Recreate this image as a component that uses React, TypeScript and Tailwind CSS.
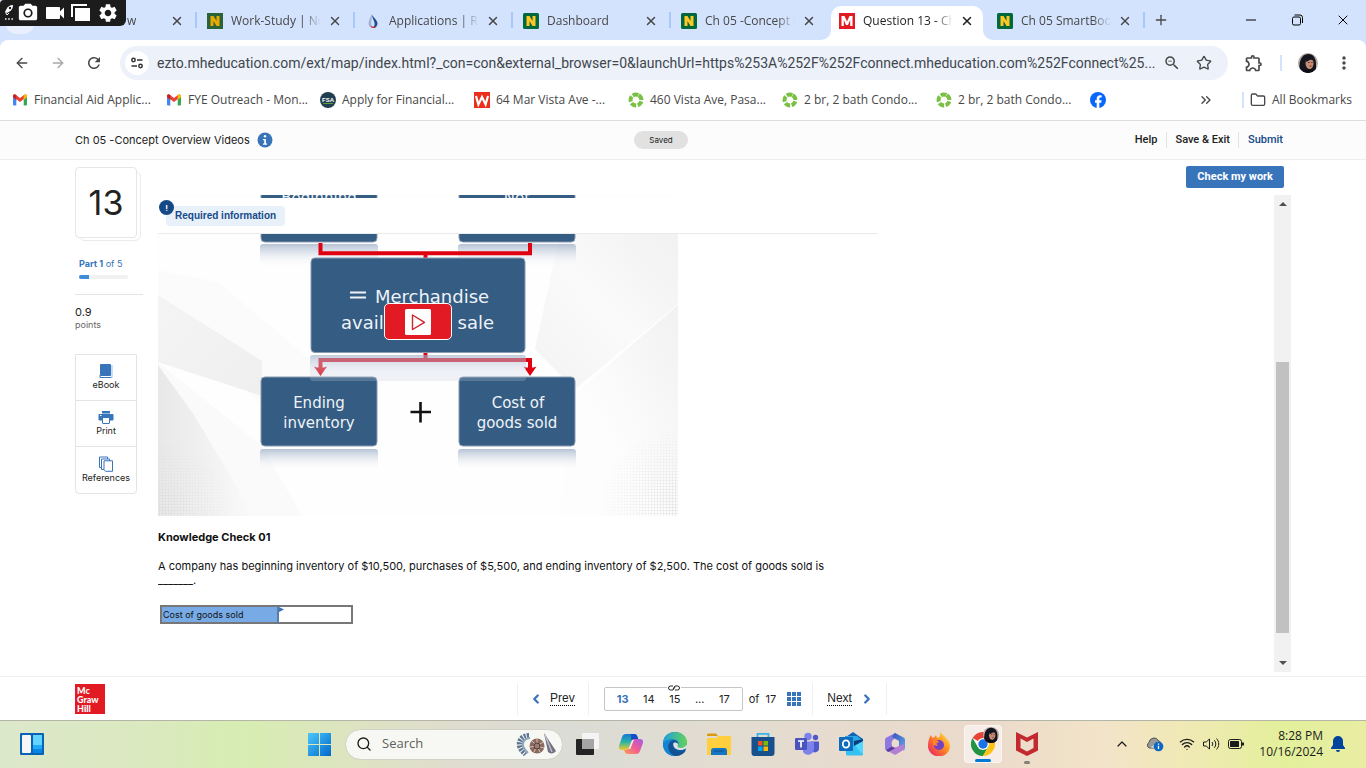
import type { ReactNode } from "react";
import {
  ArrowLeft,
  ArrowRight,
  ChevronLeft,
  ChevronRight,
  ChevronUp,
  ChevronsRight,
  Folder,
  Minus,
  Plus,
  Search,
  Star,
  Wifi,
  X,
} from "lucide-react";
import {
  MdMoreVert,
  MdOutlineExtension,
  MdPhotoCamera,
  MdRefresh,
  MdSettings,
  MdVideocam,
  MdZoomOut,
} from "react-icons/md";

const fadeOut =
  "overflow-hidden whitespace-nowrap [mask-image:linear-gradient(to_right,black_80%,transparent)]";

/* ---------- favicons ---------- */

function NIcon({ dull = false }: { dull?: boolean }) {
  return (
    <svg viewBox="0 0 16 16" className="size-4 shrink-0">
      <rect width="16" height="16" rx={dull ? 0 : 1.5} fill={dull ? "#2a6338" : "#00683a"} />
      <path
        d="M3.500 13V3h3l3 5V3h3v10h-3l-3-5v5z"
        fill={dull ? "#eaa900" : "#ffc726"}
      />
    </svg>
  );
}

function DropIcon() {
  return (
    <svg viewBox="0 0 16 16" className="size-4 shrink-0">
      <path d="M7 1C5 5 3.500 8 3.500 10.500A4.500 4.500 0 0 0 8 15c-2-2-2-5-1.500-8C6.800 5 7 3 7 1z" fill="#9fb4d6" />
      <path d="M7 1c.5 3 5.500 6 5.500 9.500C12.500 13 10.500 15 8 15c2-2 2.200-5 .5-8C7.500 5 7 3 7 1z" fill="#1c4f93" />
      <path d="M5.500 12.500C6 14 7 15 8 15c1.500 0 2.500-.6 3.300-1.600-2 .6-4.500.3-5.800-.9z" fill="#d22630" />
    </svg>
  );
}

function MIcon() {
  return (
    <svg viewBox="0 0 16 16" className="size-4 shrink-0">
      <rect width="16" height="16" fill="#e21a23" />
      <path d="M2.500 13V3h3L8 8.500 10.500 3h3v10h-2.300V7L9 12H7L4.800 7v6z" fill="#fff" />
    </svg>
  );
}

function GmailIcon() {
  return (
    <svg viewBox="0 0 16 16" className="size-4 shrink-0">
      <path d="M1 4.500 4.300 7v6.500H2a1 1 0 0 1-1-1z" fill="#4285f4" />
      <path d="M15 4.500 11.700 7v6.500H14a1 1 0 0 0 1-1z" fill="#34a853" />
      <path d="M1 5V4c0-1.600 1.800-2.100 2.800-1.200L8 6l4.200-3.200C13.200 2 15 2.500 15 4v.6L8 10 1 4.800z" fill="#ea4335" />
      <path d="M1 5V4c0-1.600 1.800-2.100 3.300-1v5z" fill="#c5221f" />
      <path d="m11.700 3 .5-.3C13.500 2 15 2.500 15 4v1l-3.300 3z" fill="#fbbc04" />
    </svg>
  );
}

function FsaIcon() {
  return (
    <svg viewBox="0 0 16 16" className="size-4 shrink-0">
      <circle cx="8" cy="8" r="8" fill="#213f50" />
      <path d="M3 11.500h10" stroke="#5c9b3c" />
      <text x="8" y="10" textAnchor="middle" fontSize="6" fontWeight="700" fontFamily="Liberation Sans, sans-serif" fill="#fff">
        FSA
      </text>
    </svg>
  );
}

function WIcon() {
  return (
    <svg viewBox="0 0 16 16" className="size-4 shrink-0">
      <rect width="16" height="16" fill="#ea2f1c" />
      <path d="m2 4 2.400 8.500L8 5l3.600 7.500L14 4" fill="none" stroke="#fff" strokeWidth="2.200" />
    </svg>
  );
}

function RingIcon() {
  return (
    <svg viewBox="0 0 16 16" className="size-4 shrink-0">
      <circle
        cx="8"
        cy="8"
        r="5.400"
        fill="none"
        stroke="#7ac043"
        strokeWidth="4"
        strokeDasharray="5.400 1.386"
        transform="rotate(-60 8 8)"
      />
    </svg>
  );
}

function FacebookIcon() {
  return (
    <svg viewBox="0 0 16 16" className="size-4 shrink-0">
      <circle cx="8" cy="8" r="8" fill="#0866ff" />
      <path d="M6.700 16v-5.300H5V8.200h1.700V7c0-2.600 1.200-3.800 3.600-3.800.5 0 1 .1 1.400.2v2.200h-.9c-1 0-1.500.4-1.500 1.500v1.100h2.300l-.4 2.500H9.300V16z" fill="#fff" />
    </svg>
  );
}

function Portrait({ className }: { className: string }) {
  return (
    <svg viewBox="0 0 20 20" className={className}>
      <defs>
        <clipPath id="face">
          <circle cx="10" cy="10" r="10" />
        </clipPath>
      </defs>
      <g clipPath="url(#face)">
        <rect width="20" height="20" fill="#b9aaa2" />
        <path d="M2 20C0 10 3 1 10 1c6 0 8 5 8 10v9z" fill="#15151f" />
        <path d="M8 6.500c3-2 7-1 7.500 3 .2 3-1 6-3.500 6.500S7.500 13 7.500 10.500z" fill="#c68d74" />
        <path d="M7 6c3-2 6-2 7.500 1-3-1-4 1-6 2z" fill="#15151f" />
        <path d="M10 9.500h1.800M13.200 9.500h1.500M11.500 13h2" stroke="#4b2622" strokeWidth=".8" />
        <path d="M3 20c0-3 3-4 8-3.500 4 .3 6 .5 6 3.500z" fill="#0c0c12" />
      </g>
    </svg>
  );
}

/* ---------- browser chrome ---------- */

const tabs: { title: string; icon: ReactNode; active?: boolean }[] = [
  { title: "w", icon: null },
  { title: "Work-Study | Nor", icon: <NIcon dull /> },
  { title: "Applications | Rap", icon: <DropIcon /> },
  { title: "Dashboard", icon: <NIcon /> },
  { title: "Ch 05 -Concept Ov", icon: <NIcon /> },
  { title: "Question 13 - Ch 0", icon: <MIcon />, active: true },
  { title: "Ch 05 SmartBook", icon: <NIcon /> },
];

function RecorderBar() {
  return (
    <div className="absolute left-0 top-0 flex h-[26px] w-[126px] items-center rounded-br-md rounded-tl-sm bg-[#1c1c1c] pl-1 text-white">
      <svg viewBox="0 0 10 18" className="h-[18px] w-2.5">
        <path d="M1 8l1.500-3C4 2.500 6 1 9 1c0 3-1 5-3.500 6.500L3 9z" fill="#fff" />
        <path d="M1.500 8.500 3 11l2-2" fill="none" stroke="#fff" />
        <circle cx="6" cy="4" r="1.200" fill="#1c1c1c" />
        <path d="M1 15h1.500M4.200 15h1.500M7.400 15h1.500" stroke="#fff" strokeWidth="1.500" />
      </svg>
      <MdPhotoCamera className="ml-[3px] size-[22px]" />
      <MdVideocam className="ml-1 size-6" />
      <svg viewBox="0 0 20 18" className="ml-1 h-[18px] w-5">
        <path d="M1 13V1h15" fill="none" stroke="#fff" strokeWidth="2" />
        <rect x="4" y="4" width="15" height="13" fill="#fff" />
      </svg>
      <MdSettings className="ml-1.5 size-[22px]" />
    </div>
  );
}

function TabStrip() {
  return (
    <div className="relative flex h-10 items-end bg-[#d3e3fd] pl-[41px] text-xs text-[#474747]">
      <div className="absolute left-1.5 top-1.5 size-7 rounded-[10px] bg-[#e9effd]" />
      {tabs.map((tab, i) => (
        <div
          key={tab.title}
          className={
            tab.active
              ? "relative mr-1.5 flex h-[34px] max-w-[152px] flex-1 items-center rounded-t-[10px] bg-white pb-[5px] pl-2 text-[#1f1f1f]"
              : "relative flex h-[34px] max-w-[158px] flex-1 items-center pb-[5px] pl-2"
          }
        >
          {tab.active && (
            <>
              <svg viewBox="0 0 10 10" className="absolute -left-2.5 bottom-0 size-2.5">
                <path d="M10 0v10H0A10 10 0 0 0 10 0z" fill="#fff" />
              </svg>
              <svg viewBox="0 0 10 10" className="absolute -right-2.5 bottom-0 size-2.5">
                <path d="M0 0v10h10A10 10 0 0 1 0 0z" fill="#fff" />
              </svg>
            </>
          )}
          {tab.icon ?? <span className="w-[70px] shrink-0" />}
          <span className={`ml-2 min-w-0 flex-1 ${fadeOut}`}>{tab.title}</span>
          <button
            aria-label="Close tab"
            className={tab.active ? "ml-1.5 mr-2 shrink-0" : "ml-1.5 mr-3.5 shrink-0"}
          >
            <X className="size-4 p-px" strokeWidth={2.5} />
          </button>
          {!tab.active && i !== 4 && (
            <span className="absolute right-0.5 top-1.5 h-4 w-0.5 bg-[#a8c7fa]" />
          )}
        </div>
      ))}
      <button aria-label="New tab" className="mb-3 ml-1.5">
        <Plus className="size-4" strokeWidth={2} />
      </button>
      <div className="mb-3 ml-auto mr-[15px] flex items-center gap-[30px] text-black">
        <button aria-label="Minimize">
          <Minus className="size-4" strokeWidth={1.5} />
        </button>
        <button aria-label="Restore">
          <svg viewBox="0 0 16 16" className="size-4" fill="none" stroke="currentColor">
            <rect x="3.500" y="5" width="8" height="8" rx="1.500" />
            <path d="M5.500 3h5.500a2.500 2.500 0 0 1 2.500 2.500V11" />
          </svg>
        </button>
        <button aria-label="Close window">
          <X className="size-4" strokeWidth={1.5} />
        </button>
      </div>
      <RecorderBar />
    </div>
  );
}

function Toolbar() {
  return (
    <div className="bg-[#d3e3fd]">
      <div className="flex h-[46px] items-center rounded-t-lg bg-white pl-3.5 text-[#474747]">
        <button aria-label="Back">
          <ArrowLeft className="size-4" />
        </button>
        <button aria-label="Forward" className="ml-5 text-[#a8a8a8]">
          <ArrowRight className="size-4" />
        </button>
        <button aria-label="Reload" className="ml-[19px]">
          <MdRefresh className="size-[18px]" />
        </button>
        <div className="ml-[17px] flex h-[34px] flex-1 items-center rounded-full bg-[#ecf1fa] pl-[5px] pr-4">
          <button aria-label="Site information" className="grid size-6 place-items-center rounded-full bg-white">
            <svg viewBox="0 0 14 14" className="size-3.5" fill="none" stroke="#333" strokeWidth="1.500">
              <circle cx="3.500" cy="4" r="1.700" />
              <path d="M7 4h5.500M1.500 10H7" />
              <circle cx="10.500" cy="10" r="1.700" />
            </svg>
          </button>
          <input
            aria-label="Address and search bar"
            readOnly
            className="ml-2 min-w-0 flex-1 bg-transparent font-['Roboto',sans-serif] text-sm text-[#41464d] outline-none"
            defaultValue="ezto.mheducation.com/ext/map/index.html?_con=con&external_browser=0&launchUrl=https%253A%252F%252Fconnect.mheducation.com%252Fconnect%25..."
          />
          <button aria-label="Zoom" className="ml-2">
            <MdZoomOut className="size-[18px]" />
          </button>
          <button aria-label="Bookmark this tab" className="ml-[15px]">
            <Star className="size-4" />
          </button>
        </div>
        <button aria-label="Extensions" className="ml-4">
          <MdOutlineExtension className="size-5" />
        </button>
        <span className="ml-4 h-4 w-0.5 bg-[#d3e3fd]" />
        <button aria-label="Profile" className="ml-4">
          <Portrait className="size-5" />
        </button>
        <button aria-label="Menu" className="ml-4 mr-3">
          <MdMoreVert className="size-5" />
        </button>
      </div>
    </div>
  );
}

const bookmarks = [
  { label: "Financial Aid Applic...", icon: <GmailIcon /> },
  { label: "FYE Outreach - Mon...", icon: <GmailIcon /> },
  { label: "Apply for Financial...", icon: <FsaIcon /> },
  { label: "64 Mar Vista Ave -...", icon: <WIcon /> },
  { label: "460 Vista Ave, Pasa...", icon: <RingIcon /> },
  { label: "2 br, 2 bath Condo...", icon: <RingIcon /> },
  { label: "2 br, 2 bath Condo...", icon: <RingIcon /> },
];

function BookmarksBar() {
  return (
    <nav className="flex h-[35px] items-center border-b border-[#dedede] bg-white pb-1.5 pl-3 text-xs text-[#474747]">
      {bookmarks.map((b, i) => (
        <a key={i} href="#" className="flex w-[154px] items-center gap-1.5 whitespace-nowrap">
          {b.icon}
          {b.label}
        </a>
      ))}
      <a href="#" aria-label="Facebook">
        <FacebookIcon />
      </a>
      <button aria-label="More bookmarks" className="ml-auto">
        <ChevronsRight className="size-4" />
      </button>
      <span className="ml-7 h-4 w-0.5 bg-[#d3e3fd]" />
      <button className="flex items-center gap-1.5 whitespace-nowrap pl-1.5 pr-3.5">
        <Folder className="size-4" />
        All Bookmarks
      </button>
    </nav>
  );
}

/* ---------- assignment page ---------- */

function PageHeader() {
  return (
    <header className="flex h-[39px] items-center border-b border-[#efefef] bg-[#fcfcfc] px-[75px] text-[11px] text-[#222]">
      <div className="flex flex-1 items-center gap-[7px]">
        <h1>Ch 05 -Concept Overview Videos</h1>
        <button aria-label="Assignment information">
          <svg viewBox="0 0 16 16" className="size-4">
            <circle cx="8" cy="8" r="7.500" fill="#3874ba" />
            <circle cx="8" cy="4.300" r="1.200" fill="#fff" />
            <path d="M6 7h2.900v4.500H10v1.200H6v-1.200h1.200V8.200H6z" fill="#fff" />
          </svg>
        </button>
      </div>
      <span className="mr-9 rounded-full bg-[#e1e1e1] px-[15px] py-0.5 text-[8px] leading-[14px]">
        Saved
      </span>
      <div className="flex flex-1 items-center justify-end pr-2 font-['Roboto',sans-serif] font-medium">
        <a href="#" className="pr-[9px]">
          Help
        </a>
        <a href="#" className="border-l border-[#e4e4e4] px-2">
          Save &amp; Exit
        </a>
        <a href="#" className="border-l border-[#e4e4e4] pl-[9px] text-[#144a87]">
          Submit
        </a>
      </div>
    </header>
  );
}

function BookIcon() {
  return (
    <svg viewBox="0 0 16 16" className="size-4">
      <rect x="2" y="1" width="11" height="12" rx="1" fill="#3874ba" />
      <path d="M14 2v12.500H3.500" fill="none" stroke="#8abdf0" />
      <path d="M2 12v2.500h11" fill="none" stroke="#3874ba" />
    </svg>
  );
}

function PrintIcon() {
  return (
    <svg viewBox="0 0 16 16" className="size-4">
      <rect x="4" y="2" width="8" height="2.500" fill="#3874ba" />
      <rect x=".5" y="5" width="15" height="6.500" rx="1" fill="#3874ba" />
      <rect x="4.500" y="8.500" width="7" height="6" rx=".5" fill="#fff" stroke="#3874ba" />
      <path d="M2 6.500h1.500" stroke="#fff" />
    </svg>
  );
}

function ReferencesIcon() {
  return (
    <svg viewBox="0 0 16 16" className="size-4" fill="#fff" stroke="#3874ba">
      <path d="M1.500 1h8v10.500h-8z" />
      <path d="M3.500 3h8v10.500h-8z" />
      <path d="M6 4.800h8.500v10.500h-7L6 13.800z" />
    </svg>
  );
}

const tools = [
  { label: "eBook", icon: <BookIcon /> },
  { label: "Print", icon: <PrintIcon /> },
  { label: "References", icon: <ReferencesIcon /> },
];

function QuestionSidebar() {
  return (
    <aside className="w-[83px] shrink-0 pt-[7px] text-[9px] text-[#222]">
      <div className="relative h-[74px] w-[66px]">
        <div className="absolute inset-0 left-1 top-1 rounded-md border border-[#ebebeb]" />
        <div className="absolute left-0 top-0 grid h-[71px] w-[62px] place-items-center rounded-[4px] border border-[#e6e6e6] bg-white text-[34px]">
          13
        </div>
      </div>
      <div className="ml-1 mt-4 text-[#3874ba]">
        <p className="leading-[14px]">
          <b>Part 1</b> of 5
        </p>
        <div className="mt-1 h-1 w-[49px] rounded-full bg-[#f1f1f1]">
          <div className="h-1 w-2.5 rounded-l-full bg-[#3d8ed8]" />
        </div>
      </div>
      <hr className="mt-[15px] w-[68px] border-[#e4e4e4]" />
      <p className="mt-2.5 text-[11px] leading-[14px]">0.9</p>
      <p className="leading-3 text-[#666]">points</p>
      <div className="mt-[23px] w-[62px] divide-y divide-[#e4e4e4] rounded-b-[4px] border border-[#e4e4e4]">
        {tools.map((tool) => (
          <button
            key={tool.label}
            className="flex h-[46px] w-full flex-col items-center justify-center pb-px text-[#3874ba]"
          >
            {tool.icon}
            <span className="leading-3 text-[#222]">{tool.label}</span>
          </button>
        ))}
      </div>
    </aside>
  );
}

function InventoryDiagram() {
  return (
    <svg
      viewBox="158 195 520 321"
      className="block w-full"
      fontFamily="DejaVu Sans, Verdana, sans-serif"
      fill="#eef3f8"
      textAnchor="middle"
    >
      <defs>
        <linearGradient id="beamLeft" x1="0" x2="1" y1="0" y2="1">
          <stop offset="0" stopColor="#f4f4f4" />
          <stop offset="1" stopColor="#efefef" />
        </linearGradient>
        <linearGradient id="beamCorner" x1="0" x2="1" y1="0" y2="0">
          <stop offset="0" stopColor="#e8e8e8" />
          <stop offset="1" stopColor="#fafafa" />
        </linearGradient>
        <linearGradient id="beamRight" x1="1" x2="0" y1="0" y2="1">
          <stop offset="0" stopColor="#f1f1f1" />
          <stop offset=".5" stopColor="#fafafa" />
          <stop offset="1" stopColor="#f3f3f3" />
        </linearGradient>
        <linearGradient id="lowRight" x1="1" x2="0" y1="0" y2="1">
          <stop offset="0" stopColor="#f1f1f1" />
          <stop offset=".6" stopColor="#fdfdfd" />
        </linearGradient>
        <linearGradient id="reflection" x1="0" x2="0" y1="0" y2="1">
          <stop offset="0" stopColor="#8fa3bf" stopOpacity=".65" />
          <stop offset="1" stopColor="#fff" stopOpacity="0" />
        </linearGradient>
        <pattern id="mesh" width="3" height="3" patternUnits="userSpaceOnUse">
          <path d="M0 0h3M0 0v3" stroke="#d5d5d5" strokeWidth=".8" />
        </pattern>
        <radialGradient id="meshFade">
          <stop offset="0" stopColor="#fff" />
          <stop offset="1" stopColor="#000" />
        </radialGradient>
        <mask id="corners">
          <circle cx="158" cy="516" r="75" fill="url(#meshFade)" />
          <circle cx="678" cy="506" r="80" fill="url(#meshFade)" />
        </mask>
      </defs>
      <rect x="158" y="195" width="520" height="321" fill="#fefefe" />
      <path d="M158 270l60 12 130 110-90 10-100-107z" fill="#fbfbfb" />
      <path d="M158 295l104 66v35l-104-34z" fill="url(#beamLeft)" />
      <path d="M158 362l104 84 40 70H158z" fill="#fafafa" />
      <path d="M158 365l36 50 60 101h-96z" fill="url(#beamCorner)" />
      <path d="M560 234h118v70l-103 85-40-40z" fill="url(#beamRight)" />
      <path d="M678 305v211H560l15-122z" fill="url(#lowRight)" />
      <rect x="158" y="430" width="520" height="86" fill="url(#mesh)" mask="url(#corners)" />

      <g fill="url(#reflection)">
        <rect x="260" y="244" width="118" height="24" rx="3" />
        <rect x="458" y="244" width="118" height="24" rx="3" />
        <rect x="260" y="449" width="118" height="22" rx="3" />
        <rect x="458" y="449" width="118" height="22" rx="3" />
      </g>
      <g fill="#355c82" stroke="#8a9bb0">
        <rect x="261" y="172" width="116" height="70" rx="4" />
        <rect x="459" y="172" width="116" height="70" rx="4" />
        <rect x="261" y="377" width="116" height="69" rx="4" />
        <rect x="459" y="377" width="116" height="69" rx="4" />
      </g>
      <path d="M320.500 243v10.300h209.500V243M425.500 253v5M425.500 353v7" fill="none" stroke="#e0000f" strokeWidth="4" />
      <path d="M320.500 368v-8h209.500v8" fill="none" stroke="#e0000f" strokeWidth="4" />
      <path d="M314 366.500l3 1h7l3-1-6.500 9.500zM523.500 366.500l3 1h7l3-1-6.500 9.500z" fill="#e0000f" />
      <rect x="310" y="355" width="216" height="26" rx="3" fill="#c4cde0" opacity=".25" />
      <rect x="310" y="355" width="216" height="22" rx="3" fill="url(#reflection)" opacity=".75" />
      <rect x="311" y="258" width="214" height="94.500" rx="4" fill="#355c82" stroke="#8a9bb0" />

      <g fontSize="15">
        <text x="319" y="203">Beginning</text>
        <text x="517" y="203">Net</text>
        <text x="319" y="408">Ending</text>
        <text x="319" y="428">inventory</text>
        <text x="518" y="408">Cost of</text>
        <text x="517" y="428">goods sold</text>
      </g>
      <path d="M350 292.500h16M350 297.500h16" stroke="#eef3f8" strokeWidth="2" />
      <g fontSize="18">
        <text x="432" y="303">Merchandise</text>
        <text x="341" y="329" textAnchor="start">avail</text>
        <text x="494" y="329" textAnchor="end">sale</text>
      </g>
      <path d="M410.500 412h20.500M420.500 402v20.500" stroke="#111" strokeWidth="2.600" />
    </svg>
  );
}

function VideoPanel() {
  return (
    <div className="relative">
      <div className="relative w-[520px] max-w-full">
        <InventoryDiagram />
        <button
          aria-label="Play video"
          className="absolute left-[226px] top-[108px] grid h-[37px] w-[68px] place-items-center rounded-[5px] border border-white bg-[#e21a23]"
        >
          <svg viewBox="0 0 26 26" className="size-[26px]">
            <rect width="26" height="26" rx="1.500" fill="#fff" />
            <path d="M7.500 6v14.500l12-7.200z" fill="none" stroke="#d2232a" strokeWidth="1.400" strokeLinejoin="round" />
          </svg>
        </button>
      </div>
      {/* sticky banner slides over the video while the question scrolls */}
      <div className="absolute left-0 top-[3px] h-9 w-full max-w-[720px] border-b border-[#ebebeb] bg-white">
        <span className="absolute left-2 top-2 rounded-[4px] bg-[#e8f0fa] px-[9px] font-['Liberation_Sans',sans-serif] text-[10px] font-bold leading-5 text-[#164a87]">
          Required information
        </span>
        <span className="absolute left-px top-0.5 grid size-[15px] place-items-center rounded-full bg-[#164a87] text-[8px] font-bold text-white">
          !
        </span>
      </div>
    </div>
  );
}

function Question() {
  return (
    <div className="min-w-0 flex-1 text-[11px] text-[#111]">
      <VideoPanel />
      <h2 className="mt-[13px] font-bold leading-4">Knowledge Check 01</h2>
      <p className="mt-3.5 max-w-[700px] leading-[14px]">
        A company has beginning inventory of $10,500, purchases of $5,500, and ending inventory of
        $2,500. The cost of goods sold is _______.
      </p>
      <table className="ml-0.5 mt-[18px] border-collapse border-2 border-[#777]">
        <tbody>
          <tr>
            <th className="h-4 w-[117px] border-r-2 border-[#5f7ea5] bg-[#78abe6] px-px text-left text-[9px] font-normal leading-[14px]">
              <label htmlFor="cogs">Cost of goods sold</label>
            </th>
            <td className="relative bg-white p-0">
              <svg viewBox="0 0 5 5" className="absolute left-0 top-0 size-[5px]">
                <path d="M0 0l5 2.500L0 5z" fill="#3874ba" />
              </svg>
              <input id="cogs" className="block h-[15px] w-[72px] px-1 outline-none" />
            </td>
          </tr>
        </tbody>
      </table>
    </div>
  );
}

function ScrollBar() {
  return (
    <div className="mb-1 flex w-[17px] shrink-0 flex-col items-center bg-[#f1f1f1] py-[7px]">
      <svg viewBox="0 0 8 4" className="h-1 w-2">
        <path d="M0 4l4-4 4 4z" fill="#505050" />
      </svg>
      <div className="flex w-[13px] flex-1 flex-col">
        <div className="flex-[156]" />
        <div className="flex-[272] bg-[#c1c1c1]" />
        <div className="flex-[28]" />
      </div>
      <svg viewBox="0 0 8 4" className="h-1 w-2">
        <path d="M0 0l4 4 4-4z" fill="#505050" />
      </svg>
    </div>
  );
}

function PageFooter() {
  return (
    <footer className="flex h-11 shrink-0 items-center border-t border-[#efefef] bg-white pl-[75px] pt-px text-[11px] text-[#222]">
      <div className="flex size-[30px] flex-col justify-center bg-[#e21a23] pl-0.5 font-['Lato',sans-serif] text-[9px] font-black leading-[9px] text-white">
        <span>Mc</span>
        <span>Graw</span>
        <span>Hill</span>
      </div>
      <nav className="ml-[412px] flex h-8 items-stretch divide-x divide-[#efefef] border-x border-[#efefef]">
        <a href="#" className="flex items-center gap-[7px] px-[11px] font-['Liberation_Sans',sans-serif] text-xs">
          <ChevronLeft className="size-3.5 text-[#3874ba]" strokeWidth={4} />
          <span className="mr-0.5 border-b border-dotted border-black leading-[13px]">Prev</span>
        </a>
        <div className="flex items-center px-[11px]">
          <div className="relative ml-1 flex h-6 w-[139px] items-center justify-between rounded-[2px] border border-[#c5c5c5] px-3">
            <svg viewBox="0 0 14 6" className="absolute left-[62px] -top-[3px] h-1.5 w-3.5 bg-white" fill="none" stroke="#222">
              <path d="M6 1H3.500a2 2 0 0 0 0 4H6l2-3M8 5h2.500a2 2 0 0 0 0-4H8L6 4" />
            </svg>
            <b className="text-[#3874ba]">13</b>
            <a href="#">14</a>
            <a href="#">15</a>
            <span>...</span>
            <a href="#">17</a>
          </div>
          <span className="ml-1.5 whitespace-nowrap">of&nbsp; 17</span>
          <button aria-label="All questions" className="ml-[11px]">
            <svg viewBox="0 0 14 14" className="size-3.5" fill="#3874ba">
              <path d="M0 0h4v4H0zM5 0h4v4H5zM10 0h4v4h-4zM0 5h4v4H0zM5 5h4v4H5zM10 5h4v4h-4zM0 10h4v4H0zM5 10h4v4H5zM10 10h4v4h-4z" />
            </svg>
          </button>
        </div>
        <a href="#" className="flex items-center gap-2 px-3 font-['Liberation_Sans',sans-serif] text-xs">
          <span className="ml-0.5 border-b border-dotted border-black leading-[13px]">Next</span>
          <ChevronRight className="size-3.5 text-[#3874ba]" strokeWidth={4} />
        </a>
      </nav>
    </footer>
  );
}

/* ---------- taskbar ---------- */

function TaskIcon({ label, children }: { label: string; children: ReactNode }) {
  return (
    <button aria-label={label} className="grid h-10 w-11 shrink-0 place-items-center">
      <svg viewBox="0 0 24 24" className="size-6">
        {children}
      </svg>
    </button>
  );
}

function Shells() {
  return (
    <svg viewBox="0 0 42 24" className="h-6 w-[42px]">
      <path d="M14 4C7 4 4 9 5 14c1 4 4 6 6 8" fill="none" stroke="#5c7590" strokeWidth="6" strokeDasharray="2 1" />
      <path d="M15 6c-5 0-8 4-7 8 1 3 3 5 5 7" fill="none" stroke="#91a6b8" strokeWidth="2" />
      <circle cx="22" cy="14" r="7.500" fill="#8a6a5e" />
      <path d="M22 14l6-4M22 14l7 2M22 14l3 6M22 14l-3 6M22 14l-7 1M22 14l-5-5M22 14V7" stroke="#d9c3b0" />
      <circle cx="22" cy="14" r="3" fill="#a07b6b" stroke="#4e3e45" />
      <path d="M29 1l12 18c-2 3-6 3-8 1z" fill="#716f83" />
      <path d="M30 3l7 17" stroke="#c2bcc4" strokeWidth="1.500" />
    </svg>
  );
}

function Taskbar() {
  return (
    <div className="flex h-12 shrink-0 items-center border-t border-[#b4b6a8] bg-[linear-gradient(to_right,#dce8cb_0%,#dbe9c0_10%,#d7edb2_18%,#dee2c3_27%,#dfdcd0_34%,#dbdcd5_42%,#e3dcd0_54%,#ebdacb_72%,#f2e4c8_81%,#f0e9b4_87%,#e3f09b_94%,#e8eda3_100%)] pb-px text-[#1b1b1b]">
      <button aria-label="Widgets" className="ml-5">
        <svg viewBox="0 0 24 22" className="h-[22px] w-6">
          <rect width="24" height="22" rx="1" fill="#0b63b5" />
          <rect x="2" y="2" width="9" height="18" rx="1" fill="#f6f6f6" />
          <rect x="13" y="2" width="9" height="10" fill="#62d5ff" />
          <rect x="13" y="12" width="9" height="4" fill="#1eaaf5" />
          <rect x="13" y="16" width="9" height="4" fill="#0a83e6" />
        </svg>
      </button>
      <div className="ml-[253px] flex items-center">
        <TaskIcon label="Start">
          <defs>
            <linearGradient id="start" x1="0" y1="0" x2="1" y2="1">
              <stop offset="0" stopColor="#4cc8fb" />
              <stop offset="1" stopColor="#0068ca" />
            </linearGradient>
          </defs>
          <path d="M1 1h11v11H1zM13 1h11v11H13zM1 13h11v11H1zM13 13h11v11H13z" fill="url(#start)" />
        </TaskIcon>
        <label className="ml-1 mr-0.5 flex h-[31px] w-[218px] items-center rounded-full border border-[#d2d2c8] bg-[#f7f8f3] pl-2.5 pr-[5px]">
          <Search className="size-4 shrink-0" />
          <input
            type="search"
            aria-label="Search"
            placeholder="Search"
            className="ml-2.5 min-w-0 flex-1 bg-transparent text-[13px] outline-none placeholder:text-[#5f5f5f]"
          />
          <Shells />
        </label>
        <TaskIcon label="Task view">
          <rect x="1" y="7" width="18" height="16" rx="1" fill="#242424" />
          <rect x="7" y="1" width="17" height="16" rx="1" fill="#f4f4f4" />
          <rect x="7" y="7" width="12" height="10" fill="#a5a5a5" />
        </TaskIcon>
        <TaskIcon label="Copilot">
          <defs>
            <linearGradient id="copA" x1="0" y1="0" x2="0" y2="1">
              <stop offset="0" stopColor="#1577d8" />
              <stop offset=".5" stopColor="#28b5a5" />
              <stop offset="1" stopColor="#f4c92b" />
            </linearGradient>
            <linearGradient id="copB" x1="1" y1="0" x2="0" y2="1">
              <stop offset="0" stopColor="#a35be8" />
              <stop offset=".5" stopColor="#ee5c94" />
              <stop offset="1" stopColor="#ff9b52" />
            </linearGradient>
          </defs>
          <path d="M7 2h8c2 0 3 1 3.500 3l.7 2h-4c-1.500 0-2.200 1-2.700 2.500L10.500 15c-.6 2-1.500 3-3.500 3H3c-2.500 0-3.500-2-2.800-4.500L3 5c.6-2 2-3 4-3z" fill="url(#copA)" />
          <path d="M12 2h3c2 0 3 1 3.500 3l.7 2h-4c-1.500 0-2.200 1-2.700 2.500z" fill="#174bc0" />
          <path d="M17 22H9c-2 0-3-1-3.500-3l-.3-1H7c2 0 3-1 3.500-3l2-5.500C13 8 13.700 7 15.200 7H21c2.500 0 3.500 2 2.800 4.500L21 19c-.6 2-2 3-4 3z" fill="url(#copB)" />
          <path d="m13 8-3.500 9h1.800l3.500-9z" fill="#f6e7ed" />
        </TaskIcon>
        <TaskIcon label="Edge">
          <defs>
            <linearGradient id="edge" x1="0" y1="0" x2="1" y2="0">
              <stop offset="0" stopColor="#209ee0" />
              <stop offset="1" stopColor="#62d456" />
            </linearGradient>
          </defs>
          <circle cx="12" cy="12" r="12" fill="#0c59a4" />
          <path d="M0 12C0 4 5 0 12 0s12 5 12 10c0 4-3 6.500-6 6.500-3.500 0-4-1.500-3-3 1.500-3-1-6-5-6-5 0-9 2-10 4.500z" fill="url(#edge)" />
          <path d="M0 12c1-3 5-5 10-4-3 1-5 4-4.500 8 .4 4 4 7 7.500 8C5 24.500 0 19 0 12z" fill="#1484d5" />
          <path d="M10 11c-2 5 2 9 7 9 2.500 0 4-.8 6-2-1 3-6 6-10 6-4-1-7-4-7.500-8C5 12 8 9 11 9z" fill="#135193" />
          <path d="M10.300 11.500c-.6 4 3 6.500 7 6.500 2.500 0 4.500-.7 6.700-2.300V12c-1 2-3.400 4-6 4-3 0-4-1.300-3-3 .8-2.300-3.900-3.700-4.700-1.500z" fill="#dfe2dc" />
        </TaskIcon>
        <TaskIcon label="File Explorer">
          <path d="M0 3c0-1 .5-1.500 1.500-1.500H9L11 4H0z" fill="#d99a0b" />
          <path d="M0 6h9l2-2h13v18c0 .6-.4 1-1 1H1c-.6 0-1-.4-1-1z" fill="#ffcf3d" />
          <path d="M4 23v-4.500C4 17 5 16 6.500 16h11c1.500 0 2.500 1 2.500 2.500V23z" fill="#1577c3" />
          <path d="M7 19h10" stroke="#0b4f92" />
        </TaskIcon>
        <TaskIcon label="Microsoft Store">
          <path d="M6.500 6V1.800h11V6" fill="none" stroke="#35b5e8" strokeWidth="1.800" />
          <path d="M.5 5h23v16a3 3 0 0 1-3 3h-17a3 3 0 0 1-3-3z" fill="#17508a" />
          <path d="M7 9h4.500v4.500H7z" fill="#f25022" />
          <path d="M12.500 9H17v4.500h-4.500z" fill="#7fba00" />
          <path d="M7 14.500h4.500V19H7z" fill="#00a4ef" />
          <path d="M12.500 14.500H17V19h-4.500z" fill="#ffb900" />
        </TaskIcon>
        <TaskIcon label="Teams">
          <circle cx="13" cy="4.500" r="3.700" fill="#7b83eb" />
          <circle cx="20.500" cy="5.500" r="2.700" fill="#5059c9" />
          <path d="M16 9.500h8V16a4 4 0 0 1-7 3z" fill="#5059c9" />
          <path d="M8 9.500h11V17a6 6 0 0 1-11 3z" fill="#7b83eb" />
          <rect y="6" width="12" height="12" rx="1" fill="#4b53bc" />
          <path d="M3 9h6M6 9v6.500" stroke="#fff" strokeWidth="1.700" />
        </TaskIcon>
        <TaskIcon label="Outlook">
          <path d="M4 7 14 0l10 7v5H4z" fill="#1066b5" />
          <path d="M6 4h12l6 5-8 6H6z" fill="#28a8ea" />
          <path d="m24 9-17 9v4c0 1 .7 1.500 1.500 1.500h14c1 0 1.500-.6 1.500-1.500z" fill="#35c1f1" />
          <path d="m24 9-8 4 6 8 2 .5z" fill="#50d9ff" />
          <path d="m24 7-9 2v5l9-5z" fill="#0a3f78" />
          <rect y="5" width="14" height="14" rx="1" fill="#0f6cbd" />
          <ellipse cx="7" cy="12" rx="3.200" ry="3.700" fill="none" stroke="#fff" strokeWidth="1.800" />
        </TaskIcon>
        <TaskIcon label="Microsoft 365">
          <defs>
            <linearGradient id="m365" x1="0" y1="0" x2="1" y2="1">
              <stop offset="0" stopColor="#2f55b5" />
              <stop offset="1" stopColor="#6fa5ee" />
            </linearGradient>
          </defs>
          <path d="M12 1 3.500 5.500C2.500 6 2 7 2 8v8c0 1 .5 2 1.500 2.500L6 20l3-4V9l6-6z" fill="#8f78e0" />
          <path d="m12 1 8.500 4.500C21.500 6 22 7 22 8v8c0 1-.5 2-1.500 2.500L16 14V9L9 5z" fill="url(#m365)" />
          <path d="M3 18l9-5 4 1 5-2v4c0 1-.5 2-1.500 2.500L13 22.500c-.6.300-1.400.3-2 0z" fill="#b480d4" />
          <path d="M3 18l6-3.500 3 2-7 3.500z" fill="#5b3fa0" />
          <circle cx="12.300" cy="11.500" r="3.700" fill="#e9dbce" />
        </TaskIcon>
        <TaskIcon label="Firefox">
          <defs>
            <linearGradient id="fox" x1="1" y1="0" x2="0" y2="1">
              <stop offset="0" stopColor="#fff14f" />
              <stop offset=".45" stopColor="#ff8b22" />
              <stop offset="1" stopColor="#e8156d" />
            </linearGradient>
          </defs>
          <path d="M13 0c2 3 4 3 6 6 2 2 4 4 4 8a11 10.500 0 0 1-22 0C1 9 2 6 4 3l1.500 3C8 5 8 4 9 3c.3 2 1 2.500 2 3 2-1 2.500-3 2-6z" fill="url(#fox)" />
          <circle cx="12" cy="13" r="5" fill="#7142c5" />
          <path d="M6 9c3-2 6 0 6 1.500-3 0-3 2-1 3-2 1-4-1-5-1z" fill="#ff8623" />
        </TaskIcon>
        <button
          aria-label="Google Chrome"
          className="relative mx-[3px] grid h-[38px] w-[38px] place-items-center rounded-[4px] border border-white/50 bg-[#f6ede8]"
        >
          <svg viewBox="0 0 24 24" className="size-6">
            <circle cx="12" cy="12" r="12" fill="#fff" />
            <path d="M12 12 1.600 6A12 12 0 0 1 22.400 6H12z" fill="#ea4335" />
            <path d="M1.600 6A12 12 0 0 0 12 24l5.200-9L12 12 6.800 15z" fill="#229342" />
            <path d="M22.400 6H12l5.200 9L12 24A12 12 0 0 0 22.400 6z" fill="#fbc116" />
            <circle cx="12" cy="12" r="6" fill="#fff" />
            <circle cx="12" cy="12" r="4.700" fill="#1a73e8" />
          </svg>
          <Portrait className="absolute right-0.5 top-px size-4" />
          <span className="absolute bottom-0 h-[3px] w-4 rounded-full bg-[#0078d4]" />
        </button>
        <button aria-label="McAfee" className="relative grid h-10 w-11 place-items-center">
          <svg viewBox="0 0 24 24" className="size-6">
            <path d="M1 0l11 5.500L23 0v18.500L12 24 1 18.500z" fill="#c22a2f" />
            <path d="M5.500 6.500 12 10l6.500-3.500V16L12 19.500 5.500 16z" fill="#eeddca" />
          </svg>
          <span className="absolute bottom-0 h-[3px] w-1.5 rounded-full bg-[#85807a]" />
        </button>
      </div>
      <div className="ml-auto flex items-center">
        <ChevronUp className="size-4" strokeWidth={1.8} />
        <svg viewBox="0 0 18 16" className="ml-4 h-4 w-[18px]">
          <path d="M3.500 12A3 3 0 0 1 3 6.500 5 5 0 0 1 12.500 5c2 .5 2.500 1.500 2.500 3l-7 4z" fill="#999" stroke="#4b4b4b" />
          <path d="M4 11.500 13 6l2 2-7 4z" fill="#d5d5cd" />
          <circle cx="12.500" cy="10.500" r="4.800" fill="#0b68c4" />
          <path d="M12.500 9.700V13M12.500 7.500v1.300" stroke="#fff" strokeWidth="1.300" />
        </svg>
        <Wifi className="ml-[15px] size-4" strokeWidth={2} />
        <svg viewBox="0 0 18 16" className="ml-[7px] h-4 w-[18px]" fill="none" stroke="currentColor">
          <path d="M1.500 6v4h2.700l3.300 3V3L4.200 6zM10 6c1 1.200 1 2.800 0 4M12.300 4.200c2 2.200 2 5.400 0 7.600M14.500 2.500c3 3.200 3 7.800 0 11" />
        </svg>
        <svg viewBox="0 0 18 16" className="ml-[7px] h-4 w-[18px]">
          <rect x="1.500" y="3.500" width="13" height="9" rx="2" fill="none" stroke="currentColor" />
          <rect x="3" y="5" width="9" height="6" rx=".5" fill="currentColor" />
          <path d="M16 6.500v3" stroke="currentColor" strokeWidth="2" />
        </svg>
        <div className="ml-3.5 text-right text-xs leading-4">
          <p>8:28 PM</p>
          <p>10/16/2024</p>
        </div>
        <svg viewBox="0 0 14 16" className="ml-2 mr-[21px] h-4 w-3.5" fill="#00439c">
          <path d="M7 0a5 5 0 0 1 5 5v4l2 3v1H0v-1l2-3V5a5 5 0 0 1 5-5zM5 14h4a2 2 0 0 1-4 0z" />
        </svg>
      </div>
    </div>
  );
}

export default function App() {
  return (
    <div className="flex h-screen flex-col overflow-hidden bg-white font-['Open_Sans',sans-serif]">
      <TabStrip />
      <Toolbar />
      <BookmarksBar />
      <div className="flex min-h-0 flex-1 flex-col font-['Inter',sans-serif]">
        <PageHeader />
        <main className="flex min-h-0 flex-1 px-[75px]">
          <QuestionSidebar />
          <div className="flex min-w-0 flex-1 flex-col">
            <div className="flex h-[35px] shrink-0 items-start justify-end pr-[7px] pt-1.5">
              <button className="rounded-[2px] bg-[#3874ba] px-[11px] font-['Roboto',sans-serif] text-[11px] font-bold leading-[22px] text-white">
                Check my work
              </button>
            </div>
            <div className="flex min-h-0 flex-1 overflow-hidden">
              <Question />
              <ScrollBar />
            </div>
          </div>
        </main>
        <PageFooter />
      </div>
      <Taskbar />
    </div>
  );
}
